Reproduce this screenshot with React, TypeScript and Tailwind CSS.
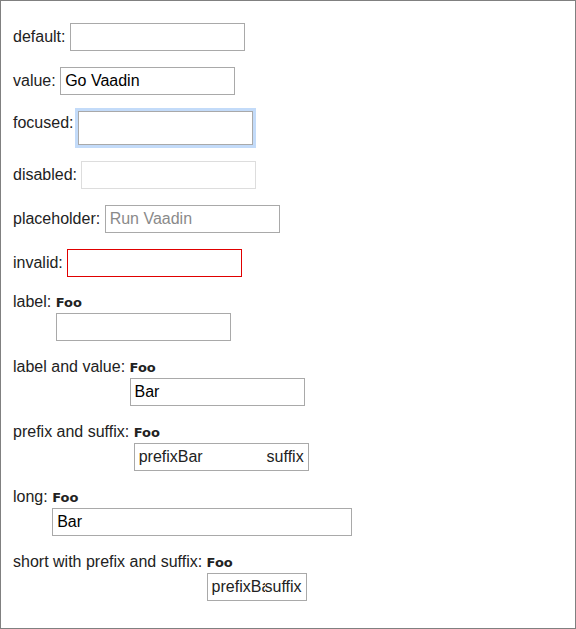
import React from 'react';

const base = "h-[28px] border border-[#a9a9a9] bg-white px-1 text-[16px] text-black outline-none font-['Liberation_Sans',Arial,sans-serif]";

function Row({ label, caption, children, className = 'items-baseline', labelClass = '' }: { label: string; caption?: string; children: React.ReactNode; className?: string; labelClass?: string }) {
  return (
    <div className={`flex ${className}`}>
      <span className={`whitespace-pre leading-[20px] ${labelClass}`}>{label + ': '}</span>
      <div className="flex flex-col">
        {caption && (
          <span className="h-[21px] leading-[21px] text-[13px] font-bold font-['DejaVu_Sans',sans-serif]">{caption}</span>
        )}
        {children}
      </div>
    </div>
  );
}

function Affixed({ width, value }: { width: string; value: string }) {
  return (
    <div className={`flex h-[28px] items-center border border-[#a9a9a9] bg-white px-1 ${width}`}>
      <span className="shrink-0 leading-[20px]">prefix</span>
      <input readOnly value={value} className="min-w-0 flex-1 bg-transparent p-0 text-[16px] outline-none" />
      <span className="shrink-0 leading-[20px]">suffix</span>
    </div>
  );
}

export default function App() {
  return (
    <div className="box-border h-[629px] w-[576px] border border-[#808080] bg-white pl-3 pt-[22px] text-[16px] text-[#222] font-['Liberation_Sans',Arial,sans-serif]">
      <Row label="default">
        <input readOnly className={`${base} w-[175px]`} />
      </Row>
      <Row label="value" className="mt-4 items-baseline">
        <input readOnly defaultValue="Go Vaadin" className={`${base} w-[175px]`} />
      </Row>
      <Row label="focused" className="mt-4 items-start" labelClass="pt-[2px]">
        <input readOnly className={`${base} h-[34px] w-[175px] shadow-[0_0_0_3px_#c3dbf9]`} />
      </Row>
      <Row label="disabled" className="mt-4 items-baseline">
        <input disabled className={`${base} -ml-px w-[175px] border-[#dddddd]`} />
      </Row>
      <Row label="placeholder" className="mt-4 items-baseline">
        <input readOnly placeholder="Run Vaadin" className={`${base} w-[175px] placeholder:text-[#8a8a8a]`} />
      </Row>
      <Row label="invalid" className="mt-4 items-baseline">
        <input readOnly className={`${base} w-[175px] border-[#e00000]`} />
      </Row>
      <Row label="label" caption="Foo" className="mt-[15px] items-baseline">
        <input readOnly className={`${base} w-[175px]`} />
      </Row>
      <Row label="label and value" caption="Foo" className="mt-4 items-baseline">
        <input readOnly defaultValue="Bar" className={`${base} w-[175px]`} />
      </Row>
      <Row label="prefix and suffix" caption="Foo" className="mt-4 items-baseline">
        <Affixed width="w-[175px]" value="Bar" />
      </Row>
      <Row label="long" caption="Foo" className="mt-4 items-baseline">
        <input readOnly defaultValue="Bar" className={`${base} w-[300px]`} />
      </Row>
      <Row label="short with prefix and suffix" caption="Foo" className="mt-4 items-baseline">
        <Affixed width="w-[100px]" value="Bar" />
      </Row>
    </div>
  );
}
